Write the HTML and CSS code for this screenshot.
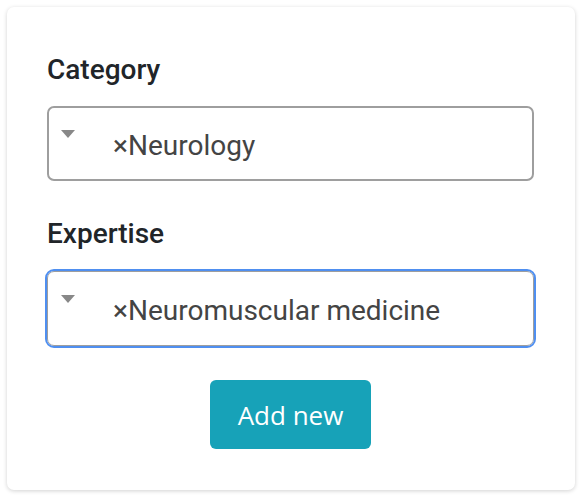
FILE: index.html
```html
<!DOCTYPE html>
<html>
<head>
<meta charset="utf-8">
<link rel="stylesheet" href="styles.css">
</head>
<body>
<div class="card">
  <div class="field">
    <label class="label">Category</label>
    <div class="select">
      <span class="arrow"></span>
      <span class="value">×Neurology</span>
    </div>
  </div>
  <div class="field">
    <label class="label">Expertise</label>
    <div class="select focused">
      <span class="arrow"></span>
      <span class="value">×Neuromuscular medicine</span>
    </div>
  </div>
  <div class="actions">
    <button class="btn">Add new</button>
  </div>
</div>
</body>
</html>
```
FILE: styles.css
```css
html, body {
  margin: 0;
  padding: 0;
  background: #ffffff;
}
body {
  padding: 7px;
  font-family: Roboto, "Liberation Sans", sans-serif;
}
.card {
  width: 568px;
  height: 483px;
  box-sizing: border-box;
  border-radius: 7px;
  background: #fff;
  box-shadow: 0 1px 4px rgba(0,0,0,0.18);
  padding: 46px 41px 0 40px;
}
.field {
  display: flex;
  flex-direction: column;
}
.field + .field {
  margin-top: 36px;
}
.label {
  font-size: 28px;
  font-weight: 500;
  color: #212529;
  line-height: 34px;
  margin-bottom: 19px;
}
.select {
  height: 75px;
  box-sizing: border-box;
  border: 2px solid #9e9e9e;
  border-radius: 7px;
  display: flex;
  align-items: center;
  position: relative;
  padding-left: 64px;
}
.select.focused {
  margin-top: 1px;
  border: 1px solid #9e9e9e;
  padding-left: 65px;
  outline: 2px solid #4f8ff0;
  outline-offset: 0;
}
.arrow {
  position: absolute;
  left: 12px;
  top: 22px;
  width: 0;
  height: 0;
  border-left: 7px solid transparent;
  border-right: 7px solid transparent;
  border-top: 8px solid #888;
}
.focused .arrow {
  left: 13px;
  top: 23px;
}
.value {
  font-size: 28px;
  color: #444;
  margin-top: 3px;
}
.actions {
  display: flex;
  justify-content: center;
  margin-top: 34px;
}
.btn {
  width: 161px;
  height: 69px;
  border: none;
  border-radius: 6px;
  background: #17a2b8;
  color: #fff;
  font-family: "Open Sans", "Noto Sans", sans-serif;
  font-size: 26px;
  padding: 0;
}
```
